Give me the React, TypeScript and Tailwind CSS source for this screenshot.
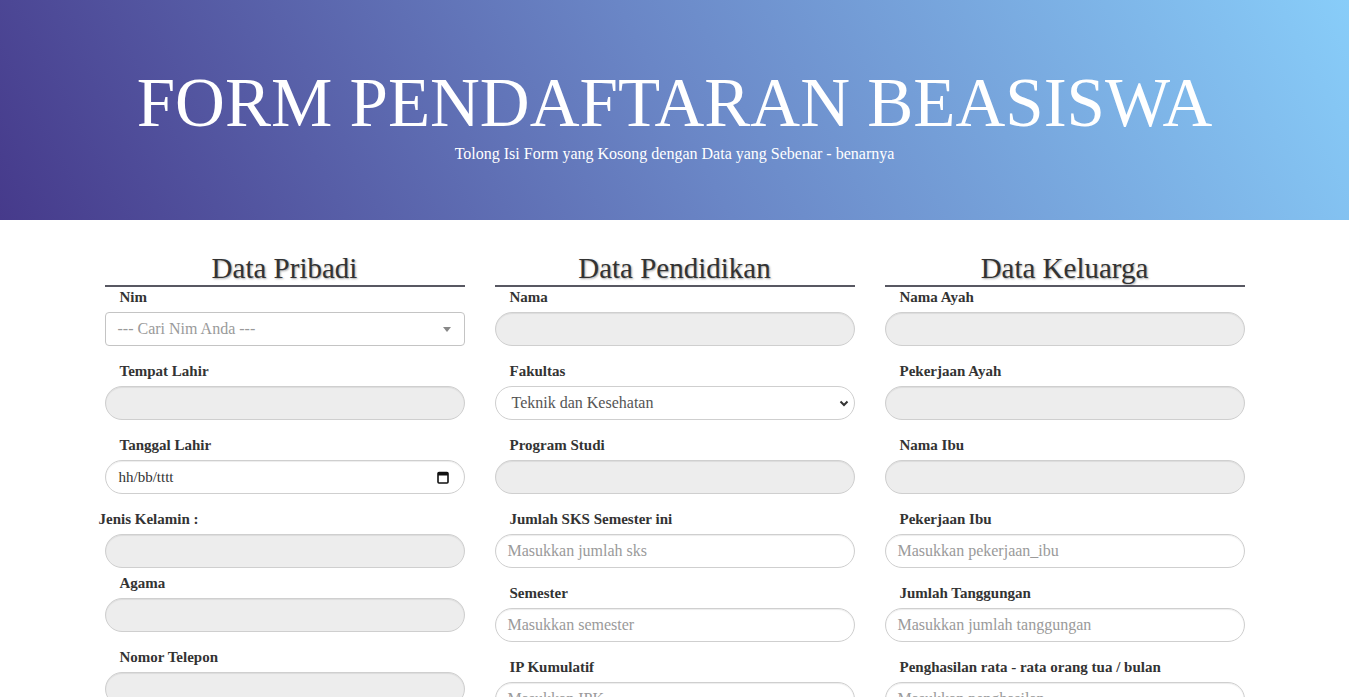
import { ReactNode } from 'react';

type Kind = 'gray' | 'text' | 'select' | 'date' | 'nim';

type Field = {
  label: string;
  kind: Kind;
  placeholder?: string;
  value?: string;
  outdent?: boolean;
  tight?: boolean;
};

const pribadi: Field[] = [
  { label: 'Nim', kind: 'nim', placeholder: '--- Cari Nim Anda ---' },
  { label: 'Tempat Lahir', kind: 'gray' },
  { label: 'Tanggal Lahir', kind: 'date', value: 'hh/bb/tttt' },
  { label: 'Jenis Kelamin :', kind: 'gray', outdent: true, tight: true },
  { label: 'Agama', kind: 'gray' },
  { label: 'Nomor Telepon', kind: 'gray' },
  { label: 'Alamat', kind: 'gray' },
];

const pendidikan: Field[] = [
  { label: 'Nama', kind: 'gray' },
  { label: 'Fakultas', kind: 'select', value: 'Teknik dan Kesehatan' },
  { label: 'Program Studi', kind: 'gray' },
  { label: 'Jumlah SKS Semester ini', kind: 'text', placeholder: 'Masukkan jumlah sks' },
  { label: 'Semester', kind: 'text', placeholder: 'Masukkan semester' },
  { label: 'IP Kumulatif', kind: 'text', placeholder: 'Masukkan IPK' },
];

const keluarga: Field[] = [
  { label: 'Nama Ayah', kind: 'gray' },
  { label: 'Pekerjaan Ayah', kind: 'gray' },
  { label: 'Nama Ibu', kind: 'gray' },
  { label: 'Pekerjaan Ibu', kind: 'text', placeholder: 'Masukkan pekerjaan_ibu' },
  { label: 'Jumlah Tanggungan', kind: 'text', placeholder: 'Masukkan jumlah tanggungan' },
  { label: 'Penghasilan rata - rata orang tua / bulan', kind: 'text', placeholder: 'Masukkan penghasilan' },
];

function Control({ f }: { f: Field }) {
  const base = 'flex h-[34px] w-full items-center text-[16px] leading-none';
  if (f.kind === 'gray') {
    return (
      <div className={`${base} rounded-full border border-[#cfcfcf] bg-[#ededed] shadow-[inset_0_1px_1px_rgba(0,0,0,0.075)]`} />
    );
  }
  if (f.kind === 'text') {
    return (
      <div className={`${base} rounded-full border border-[#cfcfcf] bg-white pl-[12px] text-[#9a9a9a] shadow-[inset_0_1px_1px_rgba(0,0,0,0.075)]`}>
        {f.placeholder}
      </div>
    );
  }
  if (f.kind === 'nim') {
    return (
      <div className={`${base} justify-between rounded-[4px] border border-[#c4c4c4] bg-white pl-[12px] pr-[13px] text-[#9a9a9a]`}>
        <span>{f.placeholder}</span>
        <span className="h-0 w-0 border-x-[4px] border-t-[5px] border-x-transparent border-t-[#888]" />
      </div>
    );
  }
  if (f.kind === 'select') {
    return (
      <div className={`${base} justify-between rounded-full border border-[#cfcfcf] bg-white pl-[16px] pr-[5px] text-[#555]`}>
        <span>{f.value}</span>
        <svg width="10" height="10" viewBox="0 0 10 10">
          <path d="M1.5 3.5 L5 7 L8.5 3.5" fill="none" stroke="#333" strokeWidth="2" />
        </svg>
      </div>
    );
  }
  return (
    <div className={`${base} justify-between rounded-full border border-[#cfcfcf] bg-white pl-[13px] pr-[15px] text-[#333] shadow-[inset_0_1px_1px_rgba(0,0,0,0.075)]`}>
      <span className="text-[15px]">{f.value}</span>
      <svg width="12" height="13" viewBox="0 0 12 13">
        <rect x="1" y="1.5" width="10" height="10.5" rx="1" fill="none" stroke="#111" strokeWidth="1.6" />
        <rect x="1" y="1.5" width="10" height="3" fill="#111" />
      </svg>
    </div>
  );
}

function Column({ title, fields }: { title: string; fields: Field[] }): ReactNode {
  return (
    <div className="flex flex-col">
      <h2 className="border-b-2 border-[#585862] pb-[1px] text-center text-[29px] leading-[32px] text-[#333] [text-shadow:1px_1px_2px_rgba(0,0,0,0.35)]">
        {title}
      </h2>
      {fields.map((f) => (
        <div key={f.label} className={f.tight ? 'mb-[5px]' : 'mb-[15px]'}>
          <label
            className={`mb-[5px] block h-[20px] text-[15px] font-bold leading-[20px] text-[#333] ${
              f.outdent ? '-ml-[6px]' : 'pl-[15px]'
            }`}
          >
            {f.label}
          </label>
          <Control f={f} />
        </div>
      ))}
    </div>
  );
}

export default function App() {
  return (
    <div className="min-h-screen bg-white font-['Liberation_Serif',serif]">
      {/* Header */}
      <header className="flex h-[220px] flex-col items-center bg-[linear-gradient(62deg,#463a8b_0%,#6a86c6_50%,#88cdf9_100%)] pt-[65px] text-white">
        <h1 className="text-[69px] font-normal leading-[76px]">FORM PENDAFTARAN BEASISWA</h1>
        <p className="mt-[3px] text-[16px] leading-[20px]">
          Tolong Isi Form yang Kosong dengan Data yang Sebenar - benarnya
        </p>
      </header>

      {/* Form */}
      <main className="mx-auto grid w-[1140px] grid-cols-3 gap-[30px] pt-[32px]">
        <Column title="Data Pribadi" fields={pribadi} />
        <Column title="Data Pendidikan" fields={pendidikan} />
        <Column title="Data Keluarga" fields={keluarga} />
      </main>
    </div>
  );
}
